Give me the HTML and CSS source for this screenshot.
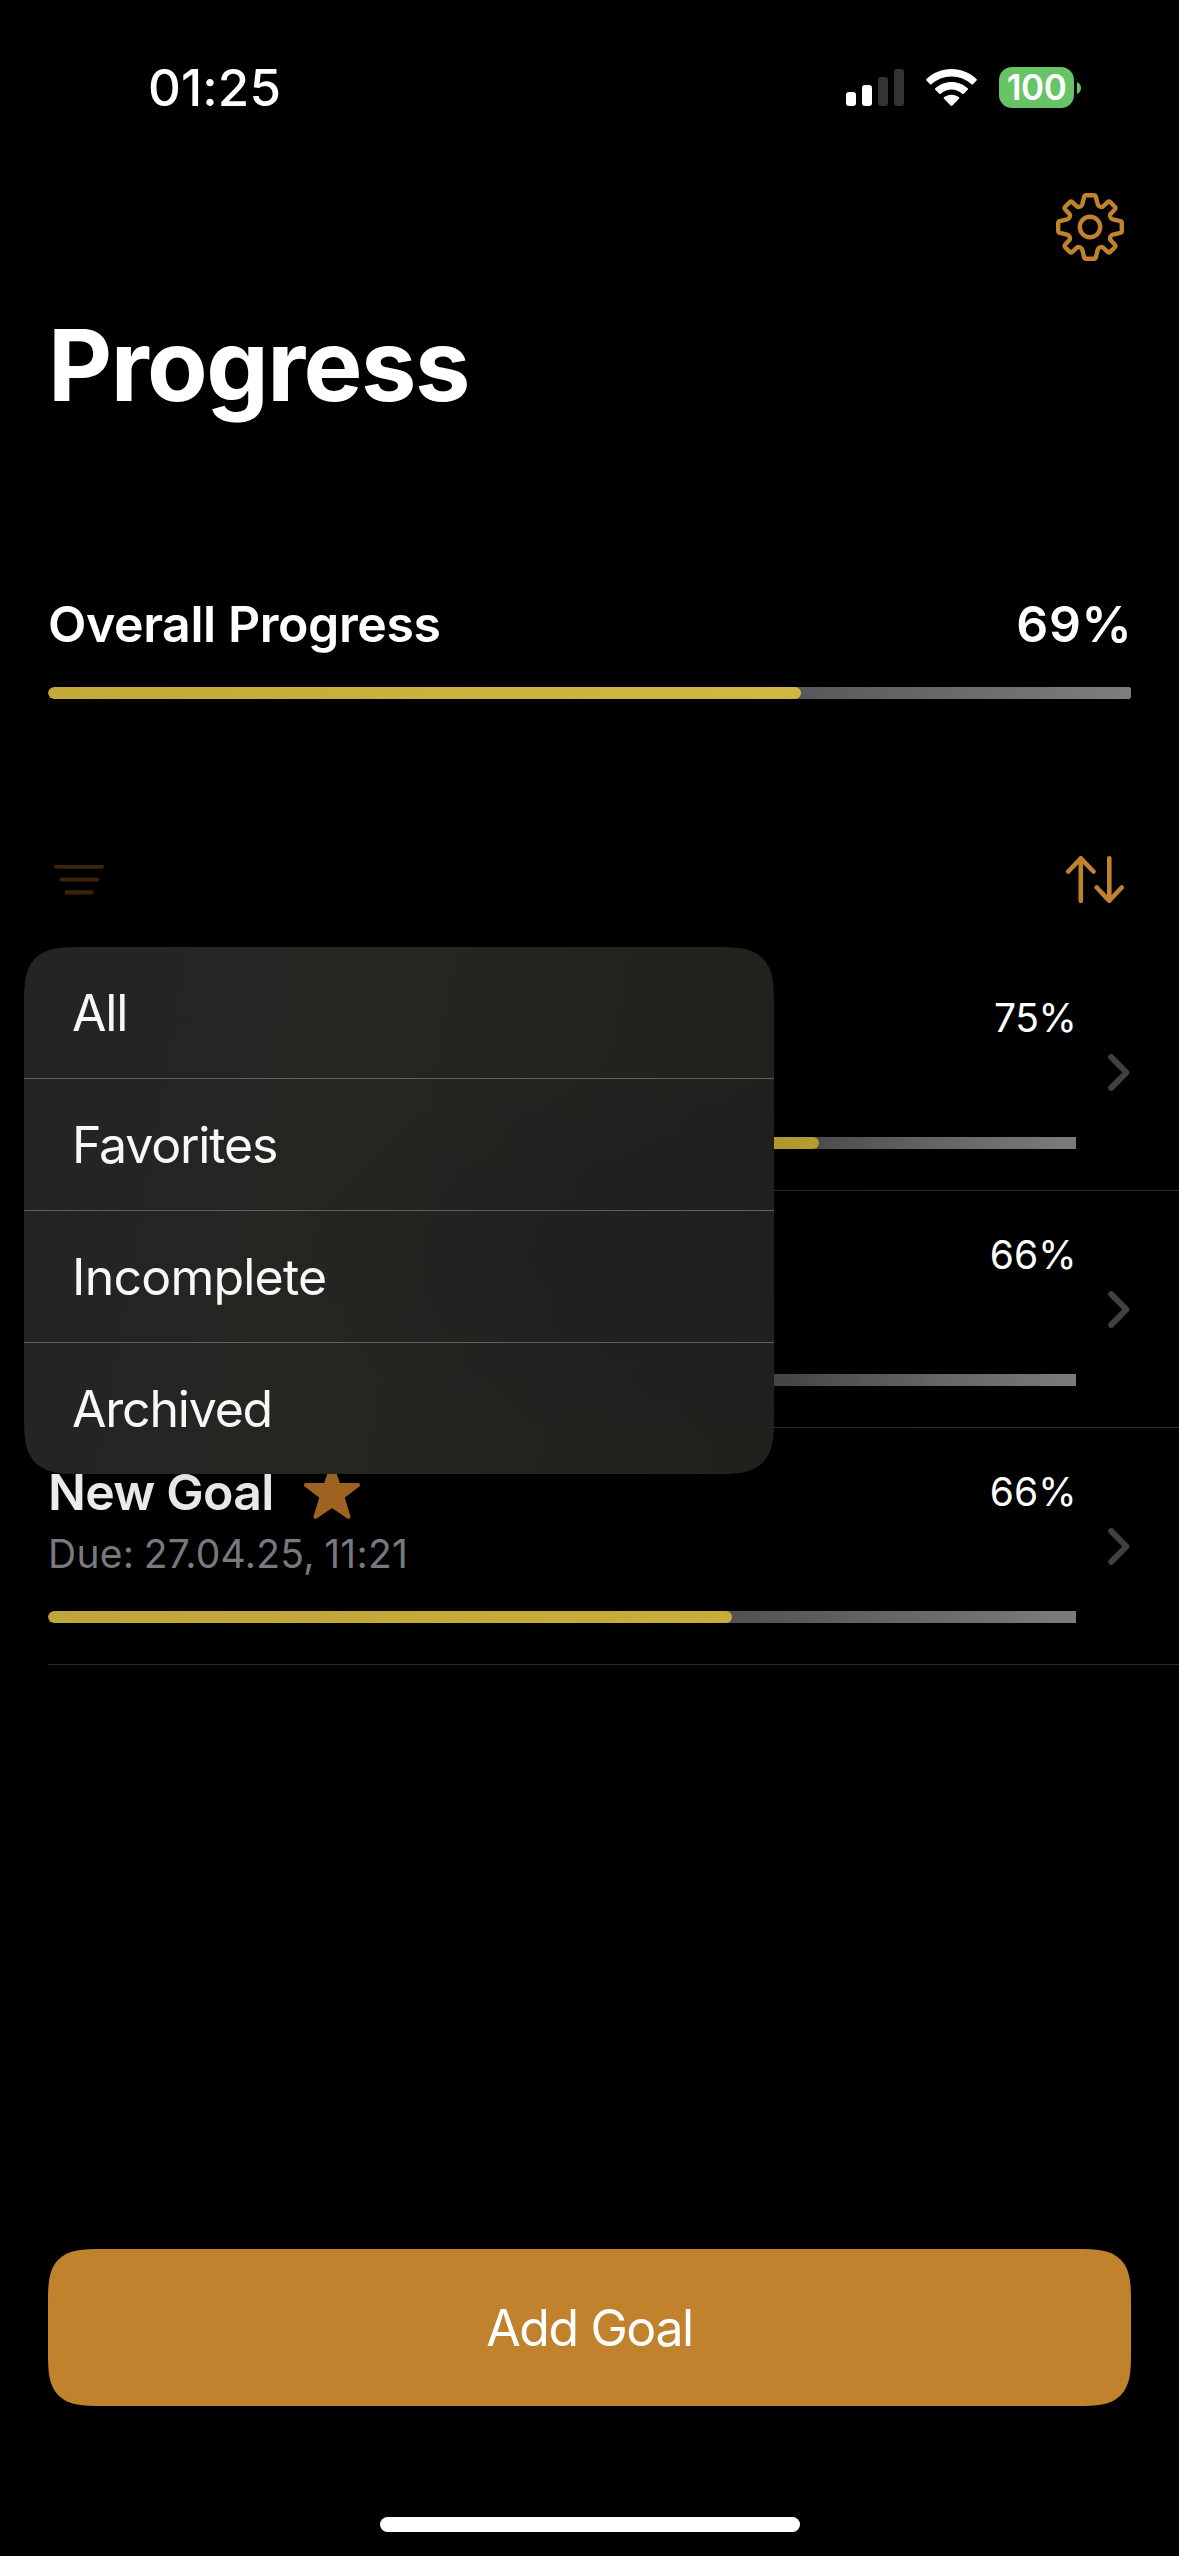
FILE: index.html
```html
<!DOCTYPE html>
<html lang="en">
<head>
<meta charset="utf-8">
<title>Progress</title>
<link rel="stylesheet" href="styles.css">
</head>
<body>
<div class="screen">
  <header class="status">
    <span class="clock">01:25</span>
    <div class="status-icons">
      <svg class="signal" width="58" height="37" viewBox="0 0 58 37">
        <rect x="0" y="23" width="10" height="14" rx="3" fill="#fff"/>
        <rect x="16" y="16" width="10" height="21" rx="3" fill="#fff"/>
        <rect x="32" y="8" width="10" height="29" rx="3" fill="#333"/>
        <rect x="48" y="0" width="10" height="37" rx="3" fill="#333"/>
      </svg>
      <svg class="wifi" width="51" height="37" viewBox="0 0 51 37" fill="#fff">
        <path d="M25.5 0C35.2 0 44 3.8 50.5 10Q51.3 10.8 50.5 11.6L47 15.2Q46.2 16 45.4 15.2C40.200 10.400 33.200 7.500 25.500 7.500S10.800 10.400 5.600 15.200Q4.800 16 4 15.200L.5 11.600Q-.3 10.800.5 10C7 3.800 15.800 0 25.500 0Z"/>
        <path d="M25.5 12.900C31.800 12.900 37.400 15.200 41.700 19.200Q42.500 20 41.700 20.800L37.700 24.700Q36.900 25.400 36.100 24.700C33.300 22.200 29.600 20.500 25.500 20.500S17.700 22.200 14.900 24.700Q14.100 25.400 13.300 24.700L9.300 20.800Q8.500 20 9.300 19.200C13.600 15.200 19.200 12.900 25.500 12.900Z"/>
        <path d="M25.5 25.700C28.400 25.700 31 26.700 33 28.300Q33.700 29 33 29.700L26.400 36.500Q25.500 37.300 24.600 36.500L18 29.700Q17.300 29 18 28.300C20 26.700 22.600 25.700 25.500 25.700Z"/>
      </svg>
      <div class="battery">
        <span class="battery-body">100</span>
        <svg width="4" height="12" viewBox="0 0 4 12"><path d="M0 0C2.600 1.200 4 3.400 4 6S2.600 10.800 0 12Z" fill="#67c466"/></svg>
      </div>
    </div>
  </header>

  <nav class="navbar">
    <svg width="70" height="70" viewBox="-35 -35 70 70" fill="none" stroke="#c1822d" stroke-width="4.400" stroke-linejoin="round">
      <circle r="10.200"/>
      <path d="M-3.800 -31.800H3.800Q5.400 -31.800 5.800 -30.400L7.700 -22.800Q8.100 -21.200 9.700 -20.500L10.500 -20.200Q11.800 -19.700 13 -20.500L17.600 -24.800Q18.900 -25.900 20.200 -24.900L24.900 -20.200Q25.900 -18.900 24.800 -17.600L20.500 -13Q19.700 -11.800 20.200 -10.500L20.500 -9.700Q21.200 -8.100 22.800 -7.700L30.400 -5.800Q31.800 -5.400 31.800 -3.800V3.800Q31.800 5.400 30.400 5.800L22.800 7.700Q21.200 8.100 20.500 9.700L20.200 10.500Q19.700 11.800 20.500 13L24.800 17.600Q25.900 18.900 24.900 20.200L20.200 24.900Q18.900 25.900 17.600 24.800L13 20.500Q11.800 19.700 10.500 20.200L9.700 20.500Q8.100 21.200 7.700 22.800L5.800 30.400Q5.400 31.800 3.800 31.800H-3.800Q-5.400 31.800 -5.800 30.400L-7.700 22.800Q-8.100 21.200 -9.700 20.500L-10.500 20.200Q-11.800 19.700 -13 20.500L-17.600 24.800Q-18.900 25.900 -20.200 24.900L-24.900 20.200Q-25.900 18.900 -24.800 17.600L-20.500 13Q-19.700 11.800 -20.200 10.500L-20.500 9.700Q-21.200 8.100 -22.800 7.700L-30.400 5.800Q-31.800 5.400 -31.800 3.800V-3.800Q-31.800 -5.400 -30.400 -5.800L-22.800 -7.700Q-21.200 -8.100 -20.500 -9.700L-20.200 -10.500Q-19.700 -11.800 -20.500 -13L-24.800 -17.600Q-25.900 -18.900 -24.900 -20.200L-20.200 -24.900Q-18.900 -25.900 -17.600 -24.800L-13 -20.500Q-11.800 -19.700 -10.500 -20.200L-9.700 -20.500Q-8.100 -21.200 -7.700 -22.800L-5.800 -30.400Q-5.400 -31.800 -3.800 -31.800Z"/>
    </svg>
  </nav>

  <h1 class="title">Progress</h1>

  <section class="overall">
    <div class="overall-head"><h2 class="overall-name">Overall Progress</h2><span class="overall-value">69%</span></div>
    <div class="bar bar-overall"><div class="fill" style="width:69.500%"></div></div>
  </section>

  <div class="toolbar">
    <svg class="filter" width="50" height="30" viewBox="0 0 50 30" stroke="#3d260b" stroke-width="4.200" stroke-linecap="round">
      <path d="M2.100 1.600H47.900M7.400 14.500H42.900M12.600 27.400H37.700"/>
    </svg>
    <svg class="sort" width="58" height="47" viewBox="0 0 58 47" fill="none" stroke="#c1822d" stroke-width="4.600" stroke-linecap="round" stroke-linejoin="round">
      <path d="M14.800 2.300V44.800M2.300 15.500L14.800 2.300L27.500 15.500M43.300 2.300V44.800M30.700 31.500L43.300 44.800L55.700 31.500"/>
    </svg>
  </div>

  <ul class="goals">
    <li class="goal">
      <div class="goal-main">
        <div class="goal-head"><span class="goal-value goal-value-narrow">75%</span></div>
        <p class="goal-due"></p>
        <div class="bar bar-shaded"><div class="fill" style="width:75%"></div></div>
      </div>
      <svg class="chevron" width="22" height="37" viewBox="0 0 22 37"><path d="M3.200 3.200L18.400 18.500L3.200 33.800"/></svg>
    </li>
    <li class="goal">
      <div class="goal-main">
        <div class="goal-head"><span class="goal-value">66%</span></div>
        <p class="goal-due"></p>
        <div class="bar bar-shaded"><div class="fill" style="width:66.500%"></div></div>
      </div>
      <svg class="chevron" width="22" height="37" viewBox="0 0 22 37"><path d="M3.200 3.200L18.400 18.500L3.200 33.800"/></svg>
    </li>
    <li class="goal">
      <div class="goal-main">
        <div class="goal-head">
          <h3 class="goal-name">New Goal</h3>
          <svg class="star" width="56" height="54" viewBox="0 0 56 54"><path d="M28 2L34.500 20H54L38.500 32L44.500 51.800L28 40.500L11.500 51.800L17.500 32L2 20H21.500Z" fill="#aa6b22" stroke="#aa6b22" stroke-width="4" stroke-linejoin="round"/></svg>
          <span class="goal-value">66%</span>
        </div>
        <p class="goal-due">Due: 27.04.25, 11:21</p>
        <div class="bar bar-soft"><div class="fill" style="width:66.500%"></div></div>
      </div>
      <svg class="chevron" width="22" height="37" viewBox="0 0 22 37"><path d="M3.200 3.200L18.400 18.500L3.200 33.800"/></svg>
    </li>
  </ul>

  <button class="add">Add Goal</button>
  <div class="home"></div>

  <div class="menu">
    <div class="menu-item">All</div>
    <div class="menu-item">Favorites</div>
    <div class="menu-item menu-item-wide">Incomplete</div>
    <div class="menu-item">Archived</div>
  </div>
</div>
</body>
</html>
```
FILE: styles.css
```css
* { box-sizing: border-box; margin: 0; padding: 0; }
body { background: #000; color: #fff; font-family: Inter, "Liberation Sans", sans-serif; }
svg { display: block; flex: none; }

.screen { position: relative; display: flex; flex-direction: column; width: 1179px; height: 2556px; padding-bottom: 24px; overflow: hidden; }

.status { display: flex; align-items: center; justify-content: space-between; height: 175px; padding: 0 98px 0 148px; }
.clock { font-size: 51px; font-weight: 500; letter-spacing: .1px; line-height: 60px; }
.status-icons { display: flex; align-items: center; gap: 22px; }
.battery { display: flex; align-items: center; gap: 3px; }
.battery-body { width: 75px; height: 41px; border-radius: 13px; background: #67c466; font-size: 35px; font-weight: 600; letter-spacing: -.500px; line-height: 41px; text-align: center; }

.navbar { display: flex; align-items: center; justify-content: flex-end; height: 104px; padding-right: 54px; }

.title { margin: 26px 48px 0; font-size: 99px; font-weight: 700; letter-spacing: -1.520px; line-height: 120px; }

.overall { margin: 169px 48px 0; }
.overall-head { display: flex; justify-content: space-between; margin-bottom: 33px; line-height: 60px; }
.overall-name { font-size: 50px; font-weight: 600; letter-spacing: -.420px; }
.overall-value { font-size: 50px; font-weight: 600; letter-spacing: .700px; margin-right: -1.500px; }

.bar { height: 12px; overflow: hidden; border-radius: 6px 0 0 6px; }
.fill { height: 12px; border-radius: 6px; background: linear-gradient(90deg, #c4a93a, #d1b843); }
.bar-overall { border-radius: 6px 2px 2px 6px; background: linear-gradient(90deg, #101011, #59595b 70%, #7e7e80); }
.bar-soft { background: linear-gradient(90deg, #1e1e20, #515153 66%, #7c7c7e); }
.bar-soft .fill { background: linear-gradient(90deg, #bea638, #c8af3c); }
.bar-shaded { background: linear-gradient(90deg, #111213 20%, #4b4d4c 72%, #5c5d5f 82%, #7b7b7c); }
.bar-shaded .fill { background: #c0a635; }

.toolbar { display: flex; align-items: center; justify-content: space-between; height: 61px; margin: 150px 55px 0 54px; }

.goals { margin-left: 48px; margin-top: 44px; list-style: none; }
.goal { display: flex; align-items: center; gap: 32px; height: 237px; border-bottom: 1px solid #2c2c2e; }
.goal-main { width: 1028px; height: 236px; padding-top: 34px; }
.goal-head { display: flex; align-items: center; height: 60px; }
.goal-name { font-size: 50px; font-weight: 600; letter-spacing: -.750px; line-height: 60px; color: #fafafa; }
.star { margin-left: 30.500px; }
.goal-value { margin-left: auto; margin-right: -.500px; font-size: 39px; line-height: 44px; }
.goal-value-narrow { letter-spacing: -.400px; }
.goal-due { height: 44px; margin: 10px 0 35px; font-size: 39px; letter-spacing: .270px; word-spacing: -1.800px; line-height: 44px; color: #7c7c80; }
.chevron { fill: none; stroke: #414143; stroke-width: 6px; stroke-linecap: round; stroke-linejoin: round; }

.add { height: 157px; margin: auto 48px 111px; border: 0; border-radius: 54px; corner-shape: superellipse(1.680); background: #c1822d; color: #fff; font-family: inherit; font-size: 50px; letter-spacing: -1.380px; line-height: 60px; }
.home { flex: none; width: 420px; height: 15px; margin: 0 auto; border-radius: 7.500px; background: #fff; }

.menu { position: absolute; left: 24px; top: 947px; width: 750px; border-radius: 58px; corner-shape: superellipse(1.680); background: radial-gradient(ellipse at 92% 58%, rgba(30, 30, 30, .8), transparent 45%), linear-gradient(100deg, #242424, #252621 45%, #20201d); box-shadow: 0 0 160px rgba(0, 5, 0, .2); overflow: hidden; }
.menu-item { height: 132px; padding-left: 48px; border-bottom: 1px solid #5f605b; font-size: 50px; letter-spacing: -1.200px; line-height: 133px; color: #f7f7f7; }
.menu-item-wide { letter-spacing: -.780px; }
.menu-item:last-child { height: 131px; border-bottom: 0; }
```
